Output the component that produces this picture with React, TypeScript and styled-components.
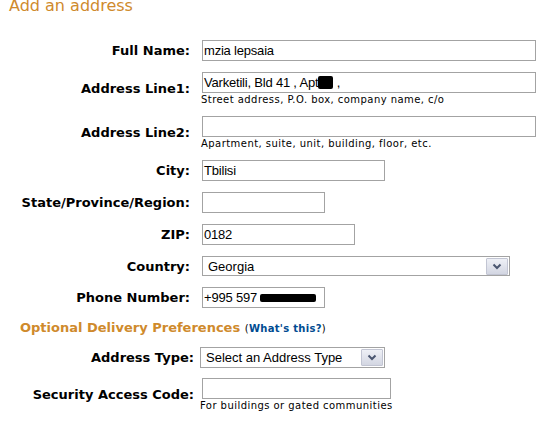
import styled, { createGlobalStyle } from 'styled-components'

const GlobalStyle = createGlobalStyle`
  html, body {
    margin: 0;
    padding: 0;
    background: #fff;
  }
  body {
    font-family: 'DejaVu Sans', Verdana, sans-serif;
    color: #000;
  }
`

// ページ全体
const Page = styled.div`
  width: 558px;
  height: 429px;
  overflow: hidden;
`

const Title = styled.h1`
  margin: -2px 0 0 9px;
  font-size: 16px;
  line-height: 16px;
  font-weight: normal;
  color: #cf8a2c;
`

// ラベル列 + 入力列
const FormGrid = styled.div<{ $labelWidth: number; $gap: number; $top: number; $rowGap: number }>`
  display: grid;
  grid-template-columns: ${({ $labelWidth }) => $labelWidth}px 1fr;
  column-gap: ${({ $gap }) => $gap}px;
  row-gap: ${({ $rowGap }) => $rowGap}px;
  align-items: center;
  margin-top: ${({ $top }) => $top}px;
`

const Label = styled.label`
  text-align: right;
  font-size: 13px;
  font-weight: bold;
  white-space: nowrap;
`

const Field = styled.div`
  display: flex;
  flex-direction: column;
  align-items: flex-start;
`

const TextBox = styled.div<{ $width: number; $shift?: number }>`
  box-sizing: border-box;
  width: ${({ $width }) => $width}px;
  height: 21px;
  margin-left: ${({ $shift }) => $shift ?? 0}px;
  border: 1px solid #a3a3a3;
  background: #fff;
  padding: 0 1px;
  display: flex;
  align-items: center;
  font-family: 'Liberation Sans', Arial, sans-serif;
  font-size: 13px;
  letter-spacing: -0.2px;
  white-space: pre;
`

const Redacted = styled.span<{ $w: number; $h: number }>`
  display: inline-block;
  width: ${({ $w }) => $w}px;
  height: ${({ $h }) => $h}px;
  background: #000;
  border-radius: 2px;
`

const Hint = styled.div<{ $shift?: number }>`
  margin-top: 2px;
  margin-left: ${({ $shift }) => $shift ?? -1}px;
  font-size: 10px;
  line-height: 10px;
  letter-spacing: 0.45px;
  color: #000;
  white-space: nowrap;
`

const SelectBox = styled.div<{ $width: number; $height?: number }>`
  box-sizing: border-box;
  width: ${({ $width }) => $width}px;
  height: ${({ $height }) => $height ?? 21}px;
  border: 1px solid #a3a3a3;
  background: #fff;
  display: flex;
  align-items: center;
  justify-content: space-between;
  padding: 0 1px 0 5px;
  font-family: 'Liberation Sans', Arial, sans-serif;
  font-size: 13px;
`

const ArrowButton = styled.span`
  box-sizing: border-box;
  width: 22px;
  height: 17px;
  border: 1px solid #c2c5d3;
  border-radius: 1px;
  background: linear-gradient(#eef0f6, #d3d6e2);
  display: flex;
  align-items: center;
  justify-content: center;
`

const SectionHeading = styled.div`
  margin: 12px 0 0 20px;
  font-size: 13px;
  line-height: 16px;
  font-weight: bold;
  color: #cf8a2c;
`

const HelpLink = styled.span`
  font-size: 10px;
  font-weight: normal;
  color: #000;
  letter-spacing: 0.3px;

  a {
    color: #004b91;
    font-weight: bold;
    text-decoration: none;
  }
`

const Chevron = () => (
  <svg width="10" height="7" viewBox="0 0 10 7">
    <path d="M1.5 1.5 L5 5 L8.5 1.5" fill="none" stroke="#4a5670" strokeWidth="2" />
  </svg>
)

export default function App() {
  return (
    <Page>
      <GlobalStyle />
      <Title>Add an address</Title>

      <FormGrid $labelWidth={190} $gap={12} $top={26} $rowGap={11}>
        <Label>Full Name:</Label>
        <Field>
          <TextBox $width={334}>mzia lepsaia</TextBox>
        </Field>

        <Label>Address Line1:</Label>
        <Field>
          <TextBox $width={334}>
            Varketili, Bld 41 , Apt<Redacted $w={15} $h={13} /> ,
          </TextBox>
          <Hint>Street address, P.O. box, company name, c/o</Hint>
        </Field>

        <Label>Address Line2:</Label>
        <Field>
          <TextBox $width={334} />
          <Hint>Apartment, suite, unit, building, floor, etc.</Hint>
        </Field>

        <Label>City:</Label>
        <Field>
          <TextBox $width={183}>Tbilisi</TextBox>
        </Field>

        <Label>State/Province/Region:</Label>
        <Field>
          <TextBox $width={123} />
        </Field>

        <Label>ZIP:</Label>
        <Field>
          <TextBox $width={153}>0182</TextBox>
        </Field>

        <Label>Country:</Label>
        <Field>
          <SelectBox $width={308} $height={20}>
            <span>Georgia</span>
            <ArrowButton>
              <Chevron />
            </ArrowButton>
          </SelectBox>
        </Field>

        <Label>Phone Number:</Label>
        <Field>
          <TextBox $width={123}>
            +995 597 <Redacted $w={56} $h={8} />
          </TextBox>
        </Field>
      </FormGrid>

      <SectionHeading>
        Optional Delivery Preferences{' '}
        <HelpLink>
          (<a href="#">What's this?</a>)
        </HelpLink>
      </SectionHeading>

      <FormGrid $labelWidth={194} $gap={6} $top={10} $rowGap={10}>
        <Label>Address Type:</Label>
        <Field>
          <SelectBox $width={185}>
            <span>Select an Address Type</span>
            <ArrowButton>
              <Chevron />
            </ArrowButton>
          </SelectBox>
        </Field>

        <Label>Security Access Code:</Label>
        <Field>
          <TextBox $width={189} $shift={2} />
          <Hint $shift={0}>For buildings or gated communities</Hint>
        </Field>
      </FormGrid>
    </Page>
  )
}
